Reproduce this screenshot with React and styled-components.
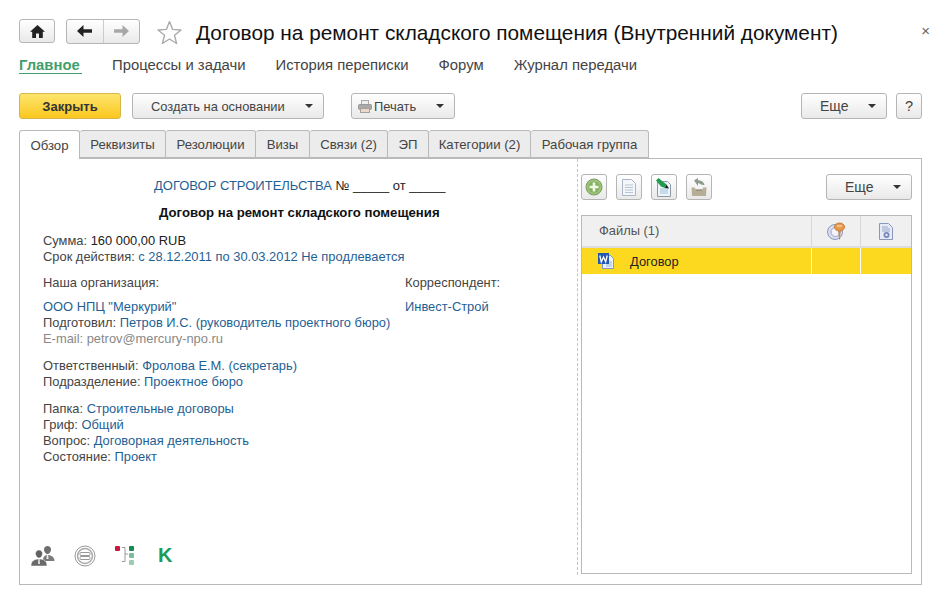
import React from 'react'
import styled, { createGlobalStyle } from 'styled-components'

const Global = createGlobalStyle`
  html, body { margin: 0; padding: 0; background: #fff; }
  body { font-family: "Liberation Sans", Arial, sans-serif; color: #333; overflow: hidden; }
  * { box-sizing: border-box; }
`

const Caret = () => (
  <svg width="8" height="4" viewBox="0 0 8 4"><path d="M0 0h8L4 4z" fill="#333" /></svg>
)

const HomeIcon = () => (
  <svg width="15" height="13" viewBox="0 0 15 13"><path d="M7.5 0 15 6.8h-2.2V13H9V8.6H6V13H2.2V6.8H0z" fill="#222" /></svg>
)

const ArrowIcon = ({ color, flip }) => (
  <svg width="15" height="12" viewBox="0 0 15 12" style={flip ? { transform: 'scaleX(-1)' } : undefined}>
    <path d="M6.5 0v4.3H15v3.4H6.5V12L0 6z" fill={color} />
  </svg>
)

const StarIcon = () => (
  <svg width="25" height="25" viewBox="0 0 25 25">
    <path d="M12.5 1.6 15.6 9.4 24 10 17.5 15.3 19.6 23.5 12.5 19 5.4 23.5 7.5 15.3 1 10 9.4 9.4z" fill="#fff" stroke="#aaa" strokeWidth="1.4" strokeLinejoin="round" />
  </svg>
)

const PrintIcon = () => (
  <svg width="14" height="13" viewBox="0 0 14 13">
    <rect x="3.5" y="0.5" width="7" height="4" fill="#eee" stroke="#aaa" />
    <rect x="0.5" y="4.5" width="13" height="5" rx="1" fill="#a9a9a9" stroke="#999" />
    <rect x="2.5" y="8.5" width="9" height="4" fill="#e8d9c8" stroke="#a8a098" />
  </svg>
)

const AddIcon = () => (
  <svg width="18" height="18" viewBox="0 0 18 18">
    <circle cx="9" cy="9" r="8" fill="#9dc27a" stroke="#7d9a66" />
    <circle cx="9" cy="9" r="5.6" fill="#83b05c" />
    <path d="M7.7 4.5h2.6v3.2h3.2v2.6h-3.2v3.2H7.7v-3.2H4.5V7.7h3.2z" fill="#f0f8e6" />
  </svg>
)

const DocIcon = () => (
  <svg width="14" height="17" viewBox="0 0 14 17">
    <path d="M.5.5h9l4 4v12H.5z" fill="#f3f6fa" stroke="#aab6c4" />
    <path d="M3 6h8M3 8.500h8M3 11h8M3 13.500h8" stroke="#b8c4d0" />
  </svg>
)

const EditDocIcon = () => (
  <svg width="18" height="19" viewBox="0 0 18 19">
    <path d="M2.5 3.500h10l3 3v12h-13z" fill="#eef5fa" stroke="#8c9aa8" />
    <path d="M5 11h8M5 13h8M5 15h8" stroke="#9fc0d8" />
    <path d="M1 2.500 3.500 0l8 6.500-1.500 3.500-4-1.500z" fill="#1f9d4d" />
    <path d="M11.500 6.500 14 10.500 10 10z" fill="#1a1a1a" />
  </svg>
)

const StampIcon = () => (
  <svg width="18" height="19" viewBox="0 0 18 19">
    <path d="M4 2.500 8 0v2.200c3.500 0 6 1.800 6.500 5L11 6.500C10 5.500 9 5.200 8 5.200V8z" fill="#8f9a8f" />
    <path d="M1.500 9.500h3l1.500 2h6l1.500-2h3L16 18H2z" fill="#b7ae98" />
    <path d="M6 11.500h6V13H6z" fill="#9a9280" />
  </svg>
)

const KeyIcon = () => (
  <svg width="19" height="19" viewBox="0 0 19 19">
    <circle cx="8" cy="10" r="7.500" fill="#d9deee" stroke="#8b97c0" />
    <circle cx="8.500" cy="10" r="4.500" fill="#f2f3f8" stroke="#9aa4c8" />
    <path d="M11 8h2.500l-.5 10-1-1z" fill="#c48d5a" />
    <ellipse cx="12.500" cy="5" rx="5" ry="4" fill="#e89a4c" stroke="#c27a38" />
    <path d="M10 4h5" stroke="#fbe6c8" />
  </svg>
)

const DocSealIcon = () => (
  <svg width="14" height="17" viewBox="0 0 14 17">
    <path d="M.5.5h9l4 4v12H.5z" fill="#e6ebf7" stroke="#8a97bd" />
    <path d="M3 4h6M3 6h8M3 8h8" stroke="#9aa6c6" />
    <circle cx="7.500" cy="12" r="3" fill="#7687bb" />
    <circle cx="7.500" cy="12" r="1.200" fill="#e6ebf7" />
  </svg>
)

const WordIcon = () => (
  <svg width="16" height="16" viewBox="0 0 16 16">
    <path d="M4.500 2.500h8l3 3v10h-11z" fill="#eaf2fb" stroke="#7b97c4" />
    <path d="M8 9h6M8 11h6M8 13h6" stroke="#9db6da" />
    <rect x="0" y="0" width="11" height="11" fill="#2357b0" />
    <path d="M1.800 2.500 3.300 9l2.200-5 2.200 5 1.500-6.500" fill="none" stroke="#fff" strokeWidth="1.300" />
  </svg>
)

const PeopleIcon = () => (
  <svg width="24" height="20" viewBox="0 0 24 20">
    <path d="M13 3.500c0-2 1.500-3.500 3.500-3.500S20 1.500 20 3.500 18.500 8 16.500 8 13 5.500 13 3.500z" fill="#6f6f6f" />
    <path d="M12 14c0-3.500 2-5 4.500-5s7 1.500 7 6h-10z" fill="#7b7b7b" />
    <path d="M15.800 9h1.400l.3 4h-2z" fill="#eee" />
    <path d="M4.500 7.500C4.500 5.500 6 4 8 4s3.500 1.500 3.500 3.500S10 12 8 12 4.500 9.500 4.500 7.500z" fill="#606060" stroke="#fff" strokeWidth=".5" />
    <path d="M0 20c0-5 3-7 8-7s8 2 8 7z" fill="#6a6a6a" stroke="#fff" strokeWidth=".5" />
    <path d="M7.300 13h1.400l.3 5H7z" fill="#ddd" />
  </svg>
)

const ButtonsIcon = () => (
  <svg width="22" height="22" viewBox="0 0 22 22" fill="none" stroke="#999">
    <circle cx="11" cy="11" r="10" />
    <circle cx="11" cy="11" r="7.500" stroke="#aaa" strokeWidth="1.500" />
    <rect x="6" y="7.500" width="10" height="3" rx="1" />
    <rect x="6" y="11.500" width="10" height="3" rx="1" />
  </svg>
)

const TreeIcon = () => (
  <svg width="20" height="20" viewBox="0 0 20 20">
    <rect x="0" y="0" width="5" height="5" rx="1" fill="#c8193f" />
    <path d="M7 1.500h3v14H7M10 8h3" fill="none" stroke="#999" />
    <rect x="14" y="0" width="5" height="5" rx="1" fill="#178a52" />
    <rect x="14" y="7" width="5" height="5" rx="1" fill="#7cbd9c" />
    <rect x="14" y="14" width="5" height="5" rx="1" fill="#9ccdb4" />
  </svg>
)

const tabs = [
  ['Обзор', 61], ['Реквизиты', 86], ['Резолюции', 90], ['Визы', 54],
  ['Связи (2)', 78], ['ЭП', 41], ['Категории (2)', 102], ['Рабочая группа', 118],
]

const sections = ['Процессы и задачи', 'История переписки', 'Форум', 'Журнал передачи']

const App = () => (
  <Page>
    <Global />
    <Header>
      <IconButton $w={36}><HomeIcon /></IconButton>
      <NavGroup>
        <NavHalf><ArrowIcon color="#222" /></NavHalf>
        <NavHalf $last><ArrowIcon color="#a8a8a8" flip /></NavHalf>
      </NavGroup>
      <StarSlot><StarIcon /></StarSlot>
      <Title>Договор на ремонт складского помещения (Внутренний документ)</Title>
      <CloseMark>×</CloseMark>
    </Header>

    <SectionBar>
      <ActiveSection>Главное</ActiveSection>
      {sections.map(s => <Section key={s}>{s}</Section>)}
    </SectionBar>

    <Toolbar>
      <PrimaryButton>Закрыть</PrimaryButton>
      <Button $w={192}><span>Создать на основании</span><Caret /></Button>
      <PrintButton><PrintLabel><PrintIcon />Печать</PrintLabel><Caret /></PrintButton>
      <Spacer />
      <Button $w={86}><MoreLabel>Еще</MoreLabel><Caret /></Button>
      <HelpButton>?</HelpButton>
    </Toolbar>

    <TabRow>
      {tabs.map(([name, w], i) => <Tab key={name} $w={w} $active={i === 0}>{name}</Tab>)}
    </TabRow>

    <Panel>
      <LeftPane>
        <DocHead><Link>ДОГОВОР СТРОИТЕЛЬСТВА</Link> № _____ от _____</DocHead>
        <DocName>Договор на ремонт складского помещения</DocName>

        <SumBlock>
          <Line>Сумма: <Dark>160 000,00 RUB</Dark></Line>
          <Line>Срок действия: <Link>с 28.12.2011 по 30.03.2012 Не продлевается</Link></Line>
        </SumBlock>

        <OrgGrid>
          <Line>Наша организация:</Line>
          <Line>Корреспондент:</Line>
          <OrgCol>
            <Line><Link>ООО НПЦ "Меркурий"</Link></Line>
            <Line>Подготовил: <Link>Петров И.С. (руководитель проектного бюро)</Link></Line>
            <MutedLine>E-mail: petrov@mercury-npo.ru</MutedLine>
          </OrgCol>
          <OrgCol>
            <Line><Link>Инвест-Строй</Link></Line>
          </OrgCol>
        </OrgGrid>

        <Block>
          <Line>Ответственный: <Link>Фролова Е.М. (секретарь)</Link></Line>
          <Line>Подразделение: <Link>Проектное бюро</Link></Line>
        </Block>

        <FolderBlock>
          <Line>Папка: <Link>Строительные договоры</Link></Line>
          <Line>Гриф: <Link>Общий</Link></Line>
          <Line>Вопрос: <Link>Договорная деятельность</Link></Line>
          <Line>Состояние: <Link>Проект</Link></Line>
        </FolderBlock>

        <BottomIcons>
          <PeopleIcon />
          <ButtonsIcon />
          <TreeIcon />
          <KLetter>K</KLetter>
        </BottomIcons>
      </LeftPane>

      <RightPane>
        <FilesBar>
          <IconButton $w={26} $h={26}><AddIcon /></IconButton>
          <IconButton $w={26} $h={26}><DocIcon /></IconButton>
          <IconButton $w={26} $h={26}><EditDocIcon /></IconButton>
          <IconButton $w={26} $h={26}><StampIcon /></IconButton>
          <Spacer />
          <Button $w={86} $h={26}><MoreLabel>Еще</MoreLabel><Caret /></Button>
        </FilesBar>

        <FileTable>
          <HeadRow>
            <NameCell>Файлы (1)</NameCell>
            <FlagCell><KeyIcon /></FlagCell>
            <FlagCell><DocSealIcon /></FlagCell>
          </HeadRow>
          <FileRow>
            <FileName><WordIcon /><span>Договор</span></FileName>
            <FileFlag />
            <FileFlag />
          </FileRow>
        </FileTable>
      </RightPane>
    </Panel>
  </Page>
)

export default App

const Page = styled.div`
  width: 948px;
  height: 599px;
  padding: 19px 26px 0 19px;
  font-size: 12.9px;
`

const Header = styled.div`
  display: flex;
  align-items: center;
  height: 24px;
  position: relative;
`

const btnBase = `
  border: 1px solid #b5b5b5;
  border-radius: 3px;
  background: linear-gradient(#fff, #e9e9e9);
  display: flex;
  align-items: center;
`

const IconButton = styled.div`
  ${btnBase}
  justify-content: center;
  flex: none;
  width: ${p => p.$w}px;
  height: ${p => p.$h || 24}px;
`

const NavGroup = styled.div`
  ${btnBase}
  margin-left: 11px;
  width: 74px;
  height: 25px;
`

const NavHalf = styled.div`
  flex: 1;
  height: 100%;
  display: flex;
  align-items: center;
  justify-content: center;
  border-left: ${p => (p.$last ? '1px solid #ccc' : 'none')};
`

const StarSlot = styled.div`
  display: flex;
  margin-left: 17px;
  margin-top: 2px;
`

const Title = styled.div`
  margin-left: 14px;
  margin-top: 4px;
  font-size: 20.8px;
  color: #111;
  white-space: nowrap;
`

const CloseMark = styled.div`
  position: absolute;
  right: -8px;
  top: 3px;
  font-size: 15px;
  color: #666;
`

const SectionBar = styled.div`
  display: flex;
  align-items: flex-start;
  gap: 30px;
  margin-top: 14px;
  height: 36px;
  font-size: 14.85px;
  color: #444;
`

const ActiveSection = styled.div`
  font-weight: bold;
  color: #3f9f6c;
  border-bottom: 1px solid #3f9f6c;
  width: 63px;
  height: 17px;
  line-height: 16px;
  white-space: nowrap;
`

const Section = styled.div`
  line-height: 16px;
  white-space: nowrap;
`

const Toolbar = styled.div`
  display: flex;
  align-items: center;
  height: 26px;
`

const PrimaryButton = styled.div`
  width: 102px;
  height: 26px;
  border: 1px solid #d9b64a;
  border-radius: 3px;
  background: linear-gradient(#fde56d, #fbc71f);
  display: flex;
  align-items: center;
  justify-content: center;
  font-size: 13px;
  font-weight: bold;
  color: #333;
`

const Button = styled.div`
  ${btnBase}
  justify-content: space-between;
  flex: none;
  width: ${p => p.$w}px;
  height: ${p => p.$h || 26}px;
  padding: 0 10px 0 18px;
  margin-left: 11px;
  font-size: 12.9px;
  color: #444;
`

const PrintButton = styled(Button)`
  width: 104px;
  margin-left: 27px;
  padding: 0 10px 0 6px;
`

const PrintLabel = styled.span`
  display: flex;
  align-items: center;
  gap: 2px;
`

const MoreLabel = styled.span`
  font-size: 14px;
`

const HelpButton = styled(IconButton).attrs({ $w: 26, $h: 26 })`
  margin-left: 9px;
  font-size: 14.5px;
  color: #444;
`

const Spacer = styled.div`
  flex: 1;
`

const TabRow = styled.div`
  display: flex;
  margin-top: 11px;
  height: 28px;
  position: relative;
  z-index: 1;
`

const Tab = styled.div`
  width: ${p => p.$w}px;
  height: ${p => (p.$active ? 29 : 28)}px;
  display: flex;
  align-items: center;
  justify-content: center;
  border: 1px solid #b9b9b9;
  border-left-width: ${p => (p.$active ? 1 : 0)}px;
  border-bottom: ${p => (p.$active ? 'none' : '1px solid #b9b9b9')};
  border-radius: 3px 3px 0 0;
  background: ${p => (p.$active ? '#fff' : '#ececec')};
  color: #444;
  font-size: 13.2px;
`

const Panel = styled.div`
  display: flex;
  height: 427px;
  border: 1px solid #b9b9b9;
`

const LeftPane = styled.div`
  width: 558px;
  height: 416px;
  padding: 19px 0 0 23px;
  border-right: 1px dashed #c4c4c4;
  position: relative;
`

const DocHead = styled.div`
  padding-left: 111px;
  font-size: 13px;
  line-height: 16px;
  color: #222;
`

const DocName = styled.div`
  margin-top: 11px;
  padding-left: 116px;
  font-size: 13.2px;
  font-weight: bold;
  line-height: 16px;
  color: #111;
`

const Block = styled.div`
  margin-top: 11px;
`

const SumBlock = styled.div`
  margin-top: 12px;
`

const FolderBlock = styled.div`
  margin-top: 10px;
`

const Line = styled.div`
  line-height: 16.2px;
  white-space: nowrap;
  color: #444;
`

const MutedLine = styled(Line)`
  color: #888;
`

const Link = styled.span`
  color: #1f5f94;
`

const Dark = styled.span`
  color: #222;
`

const OrgGrid = styled.div`
  display: grid;
  grid-template-columns: 362px 1fr;
  row-gap: 7px;
  margin-top: 10px;
`

const OrgCol = styled.div``

const BottomIcons = styled.div`
  position: absolute;
  left: 11px;
  bottom: 8px;
  display: flex;
  align-items: center;
  gap: 19px;
`

const KLetter = styled.span`
  font-size: 20px;
  font-weight: bold;
  color: #1d9a5c;
  margin-left: 4px;
`

const RightPane = styled.div`
  flex: 1;
  padding: 15px 9px 10px 3px;
  display: flex;
  flex-direction: column;
`

const FilesBar = styled.div`
  display: flex;
  align-items: center;
  gap: 9px;
  height: 26px;
`

const FileTable = styled.div`
  margin-top: 15px;
  flex: 1;
  border: 1px solid #b9b9b9;
`

const HeadRow = styled.div`
  display: grid;
  grid-template-columns: 229px 49px 1fr;
  height: 32px;
  background: #f0f0f0;
  border-bottom: 2px solid #ddd;
`

const NameCell = styled.div`
  display: flex;
  align-items: center;
  padding-left: 17px;
  padding-bottom: 2px;
  color: #555;
`

const FlagCell = styled.div`
  display: flex;
  align-items: center;
  justify-content: center;
  border-left: 1px solid #d8d8d8;
`

const FileRow = styled.div`
  display: grid;
  grid-template-columns: 229px 49px 1fr;
  height: 27px;
  background: #fcd91e;
  border-bottom: 1px solid #fff;
`

const FileName = styled.div`
  display: flex;
  align-items: center;
  gap: 16px;
  padding-left: 16px;
  color: #222;
`

const FileFlag = styled.div`
  border-left: 1px solid #fff;
`
